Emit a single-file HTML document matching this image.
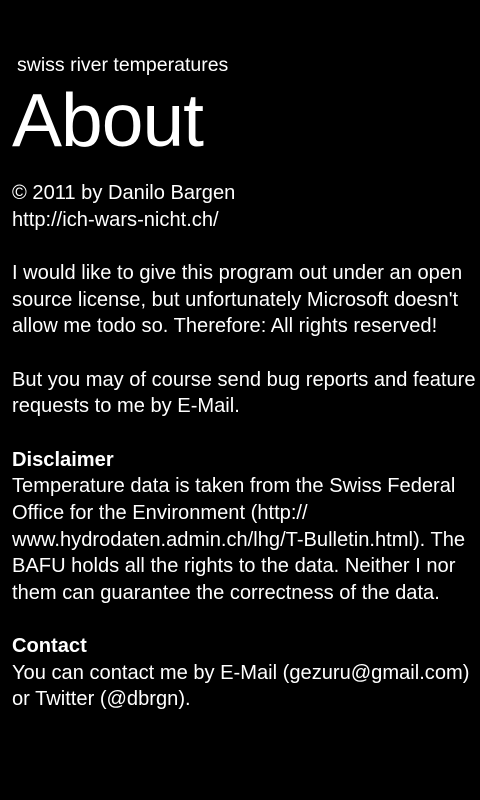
<!DOCTYPE html>
<html><head><meta charset="utf-8"><style>
html,body{margin:0;padding:0;background:#000;width:480px;height:800px;overflow:hidden}
body{color:#fff;font-family:"Liberation Sans","DejaVu Sans",sans-serif;position:relative}
.t{position:absolute;left:17px;top:53px;font-size:19.5px;line-height:24px}
.h{position:absolute;left:12px;top:78px;font-size:75px;line-height:84px;letter-spacing:-1px}
.b{position:absolute;left:12px;top:180px;font-size:20.1px;line-height:26.65px;white-space:pre}
b{font-weight:bold}
</style></head><body>
<div class="t">swiss river temperatures</div>
<div class="h">About</div>
<div class="b">© 2011 by Danilo Bargen
http://ich-wars-nicht.ch/

I would like to give this program out under an open
source license, but unfortunately Microsoft doesn't
allow me todo so. Therefore: All rights reserved!

But you may of course send bug reports and feature
requests to me by E-Mail.

<b>Disclaimer</b>
Temperature data is taken from the Swiss Federal
Office for the Environment (http://
www.hydrodaten.admin.ch/lhg/T-Bulletin.html). The
BAFU holds all the rights to the data. Neither I nor
them can guarantee the correctness of the data.

<b>Contact</b>
You can contact me by E-Mail (gezuru@gmail.com)
or Twitter (@dbrgn).</div>
</body></html>
